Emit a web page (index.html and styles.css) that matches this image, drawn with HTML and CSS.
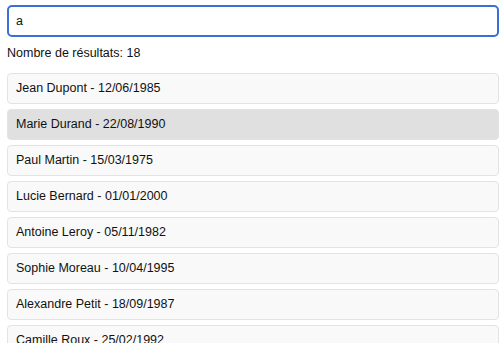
FILE: index.html
```html
<!DOCTYPE html>
<html lang="fr">
<head>
    <meta charset="UTF-8">
    <meta name="viewport" content="width=device-width, initial-scale=1.0">
    <title>Recherche</title>
    <link rel="stylesheet" href="styles.css">
</head>
<body>

<div class="container">
    <input type="text" class="search" id="search-input" value="a">
    <p class="count" id="result-count">Nombre de résultats: 18</p>
    <ul class="results" id="result-list">
        <li class="item">Jean Dupont - 12/06/1985</li>
        <li class="item active">Marie Durand - 22/08/1990</li>
        <li class="item">Paul Martin - 15/03/1975</li>
        <li class="item">Lucie Bernard - 01/01/2000</li>
        <li class="item">Antoine Leroy - 05/11/1982</li>
        <li class="item">Sophie Moreau - 10/04/1995</li>
        <li class="item">Alexandre Petit - 18/09/1987</li>
        <li class="item">Camille Roux - 25/02/1992</li>
    </ul>
</div>

</body>
</html>
```

FILE: styles.css
```css
body {
    font-family: "Liberation Sans", Arial, sans-serif;
    font-size: 12.5px;
    color: #111;
    margin: 0;
    background: #fff;
}

.container {
    padding: 5px 1px 0 7px;
}

.search {
    display: block;
    box-sizing: border-box;
    width: 100%;
    height: 32px;
    margin: 0;
    padding: 0 7px;
    border: 2px solid #3a6fd5;
    border-radius: 5px;
    font-family: inherit;
    font-size: 12.5px;
    color: #111;
    outline: none;
}

.count {
    margin: 9px 0 13px;
}

.results {
    list-style: none;
    margin: 0;
    padding: 0;
}

.item {
    box-sizing: border-box;
    height: 31px;
    line-height: 29px;
    margin-bottom: 5px;
    padding: 0 8px;
    background: #f9f9f9;
    border: 1px solid #e3e3e3;
    border-radius: 4px;
}

.item.active {
    background: #e0e0e0;
}
```
